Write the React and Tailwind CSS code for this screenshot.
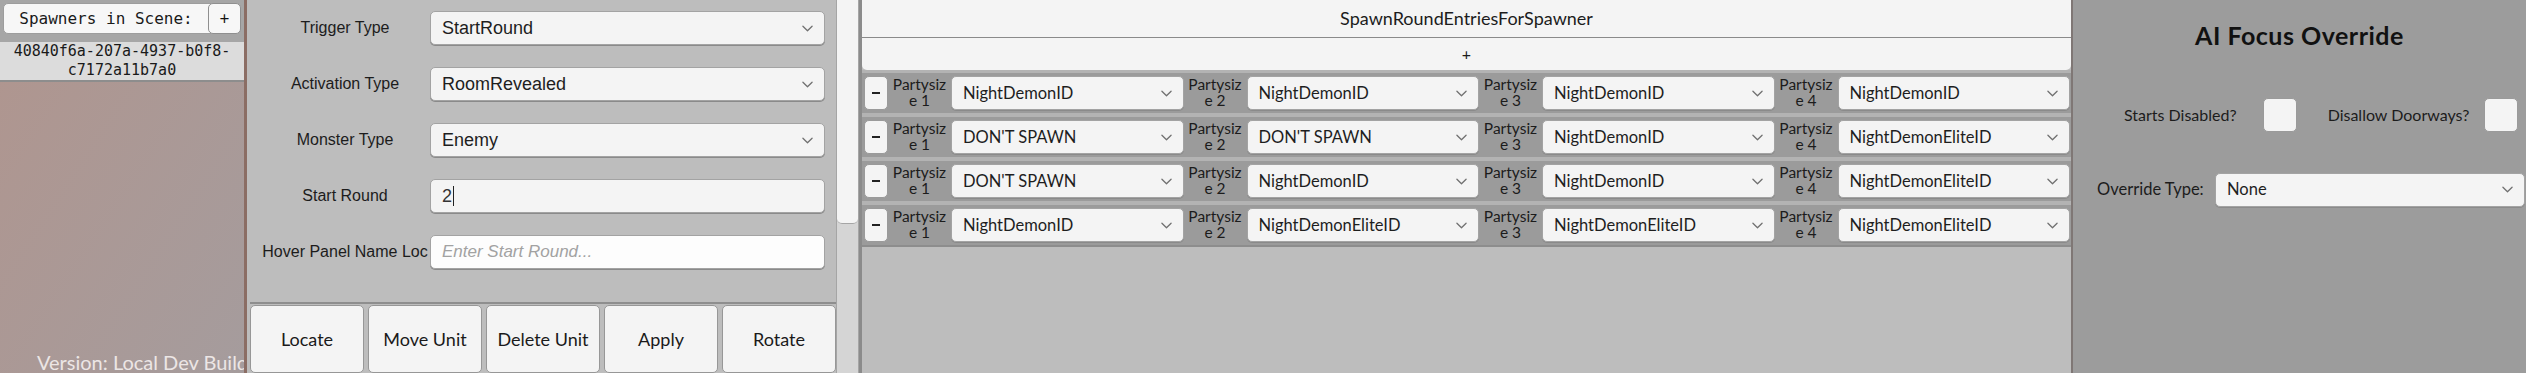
const ui = { fontFamily: "Lato, 'Noto Sans', sans-serif" };
const arial = { fontFamily: "'Liberation Sans', Arial, sans-serif" };
const mono = { fontFamily: "'DejaVu Sans Mono', monospace" };

function Chevron({ className = "" }) {
  return (
    <svg viewBox="0 0 12 7" className={`w-[11px] h-[7px] shrink-0 ${className}`} fill="none">
      <path d="M1 1l5 5 5-5" stroke="#707070" strokeWidth="1.4" strokeLinecap="round" strokeLinejoin="round" />
    </svg>
  );
}

function Select({ value, className = "", textClass = "text-[16.5px]", font = ui }) {
  return (
    <div
      className={`flex items-center justify-between h-[34px] rounded-[5px] bg-[#f4f4f4] border border-[#a3a3a3] shadow-[0_1px_0_#8a8a8a] pl-[11px] pr-[11px] ${className}`}
    >
      <span className={`text-[#1e1e1e] whitespace-nowrap ${textClass}`} style={font}>
        {value}
      </span>
      <Chevron />
    </div>
  );
}

const formRows = [
  { label: "Trigger Type", value: "StartRound", kind: "select" },
  { label: "Activation Type", value: "RoomRevealed", kind: "select" },
  { label: "Monster Type", value: "Enemy", kind: "select" },
  { label: "Start Round", value: "2", kind: "input" },
  { label: "Hover Panel Name Loc", value: "Enter Start Round...", kind: "placeholder" },
];

const spawnRows = [
  ["NightDemonID", "NightDemonID", "NightDemonID", "NightDemonID"],
  ["DON'T SPAWN", "DON'T SPAWN", "NightDemonID", "NightDemonEliteID"],
  ["DON'T SPAWN", "NightDemonID", "NightDemonID", "NightDemonEliteID"],
  ["NightDemonID", "NightDemonEliteID", "NightDemonEliteID", "NightDemonEliteID"],
];

function LeftPanel() {
  return (
    <div className="relative w-[247px] shrink-0 h-full flex flex-col border-r-[3px] border-[#8b6d64] bg-gradient-to-br from-[#b0958e] to-[#a59c9d] overflow-hidden">
      <div className="bg-[#a6a6a6] p-[3px] pb-[8px]">
        <div className="flex items-center h-[31px] rounded-[5px] bg-[#f7f7f7] border border-[#9d9d9d]">
          <span className="flex-1 text-center text-[16px] text-[#1a1a1a]" style={mono}>
            Spawners in Scene:
          </span>
          <button className="w-[33px] h-[31px] -mr-px rounded-[5px] border border-[#8f8f8f] bg-[#f7f7f7] text-[17px] text-[#111] flex items-center justify-center" style={ui}>
            +
          </button>
        </div>
      </div>
      <div className="bg-[#dcdcdc] border-b-[2px] border-[#8d8d8d] h-[40px] flex flex-col items-center justify-center text-[15px] leading-[19px] text-[#1a1a1a]" style={mono}>
        <span>40840f6a-207a-4937-b0f8-</span>
        <span>c7172a11b7a0</span>
      </div>
      <div className="flex-1" />
      <span className="absolute left-[37px] bottom-[-4px] text-[20px] text-[#ece6e5] whitespace-nowrap" style={ui}>
        Version: Local Dev Build(
      </span>
    </div>
  );
}

function FormPanel() {
  return (
    <div className="w-[615px] shrink-0 h-full flex bg-[#bdbdbd] border-r-[3px] border-[#8b8b8b]">
      <div className="w-[589px] flex flex-col pl-[3px]">
        <div className="flex-1 flex flex-col gap-[22px] pt-[11px]">
          {formRows.map((r) => (
            <div key={r.label} className="flex items-center h-[34px]">
              <div className="w-[180px] pl-[12px] pr-[2px] overflow-hidden">
                <div className="text-center whitespace-nowrap text-[16px] text-[#1c1c1c]" style={arial}>
                  {r.label}
                </div>
              </div>
              {r.kind === "select" && <Select value={r.value} className="w-[395px]" textClass="text-[18px]" font={arial} />}
              {r.kind === "input" && (
                <div className="w-[395px] h-[34px] rounded-[5px] bg-[#f4f4f4] border border-[#a3a3a3] shadow-[0_1px_0_#8a8a8a] flex items-center pl-[11px]">
                  <span className="text-[18px] text-[#333]" style={arial}>2</span>
                  <span className="w-px h-[20px] bg-[#222] ml-px" />
                </div>
              )}
              {r.kind === "placeholder" && (
                <div className="w-[395px] h-[34px] rounded-[5px] bg-[#fdfdfd] border border-[#a3a3a3] shadow-[0_1px_0_#8a8a8a] flex items-center pl-[11px]">
                  <span className="text-[17px] italic text-[#a2a2a2]" style={arial}>{r.value}</span>
                </div>
              )}
            </div>
          ))}
        </div>
        <div className="h-[71px] border-t-[2px] border-[#8e8e8e] flex gap-[4px] pt-px">
          {["Locate", "Move Unit", "Delete Unit", "Apply", "Rotate"].map((b) => (
            <button
              key={b}
              className="flex-1 h-full rounded-[5px] bg-[#f4f4f4] border border-[#979797] text-[18px] text-[#1a1a1a]"
              style={ui}
            >
              {b}
            </button>
          ))}
        </div>
      </div>
      <div className="w-[23px] h-full bg-[#d5d5d5] border-x border-[#a5a5a5] flex flex-col">
        <div className="h-[224px] bg-[#f4f4f4] rounded-b-[5px] border-b border-[#a5a5a5]" />
      </div>
    </div>
  );
}

function SpawnPanel() {
  return (
    <div className="w-[1211px] shrink-0 h-full flex flex-col bg-[#bdbdbd] border-r-[2px] border-[#7f7775]">
      <div className="h-[38px] bg-[#f4f4f4] border-b border-[#8a8a8a] flex items-center justify-center text-[18px] text-[#1c1c1c]" style={ui}>
        SpawnRoundEntriesForSpawner
      </div>
      <div className="h-[32px] bg-[#f4f4f4] rounded-b-[5px] flex items-center justify-center text-[16px] text-[#1c1c1c]" style={ui}>
        +
      </div>
      <div className="flex flex-col gap-[4px] bg-[#b3b3b3] pt-[3px] border-b-[2px] border-[#8d8d8d]">
        {spawnRows.map((row, i) => (
          <div key={i} className="h-[40px] bg-[#9b9b9b] flex items-start pt-[3px] pl-[2px] pr-[1px] gap-[3px]">
            <button className="w-[24px] h-[34px] rounded-[5px] bg-[#f4f4f4] border border-[#9a9a9a] flex items-center justify-center">
              <span className="w-[8px] h-[2px] bg-[#222]" />
            </button>
            {row.map((v, j) => (
              <div key={j} className="flex items-start gap-[3px] flex-1">
                <div className="w-[57px] shrink-0 flex flex-col items-center text-[15.5px] leading-[16px] text-[#1c1c1c] whitespace-nowrap" style={ui}>
                  <span>Partysiz</span>
                  <span>e {j + 1}</span>
                </div>
                <Select value={v} className="flex-1" />
              </div>
            ))}
          </div>
        ))}
      </div>
      <div className="flex-1" />
    </div>
  );
}

function FocusPanel() {
  return (
    <div className="flex-1 h-full bg-[#9c9c9c] flex flex-col" style={ui}>
      <div className="pt-[17px] text-center text-[25px] font-bold text-[#111] tracking-[0.5px]">AI Focus Override</div>
      <div className="flex items-center mt-[43px] pl-[51px] h-[34px] whitespace-nowrap">
        <span className="shrink-0 text-[16px] text-[#1c1c1c]">Starts Disabled?</span>
        <div className="ml-[26px] w-[34px] h-[34px] shrink-0 rounded-[5px] bg-[#f4f4f4] border border-[#9a9a9a]" />
        <span className="ml-[31px] shrink-0 text-[16px] text-[#1c1c1c]">Disallow Doorways?</span>
        <div className="ml-[15px] w-[34px] h-[34px] shrink-0 rounded-[5px] bg-[#f4f4f4] border border-[#9a9a9a]" />
      </div>
      <div className="flex items-center mt-[41px] pl-[24px]">
        <span className="text-[16.5px] text-[#1c1c1c] w-[118px] shrink-0 whitespace-nowrap">Override Type:</span>
        <Select value="None" className="flex-1 mr-px" textClass="text-[16.5px]" />
      </div>
    </div>
  );
}

export default function App() {
  return (
    <div className="w-[2526px] h-[373px] flex overflow-hidden bg-[#bdbdbd]">
      <LeftPanel />
      <FormPanel />
      <SpawnPanel />
      <FocusPanel />
    </div>
  );
}
